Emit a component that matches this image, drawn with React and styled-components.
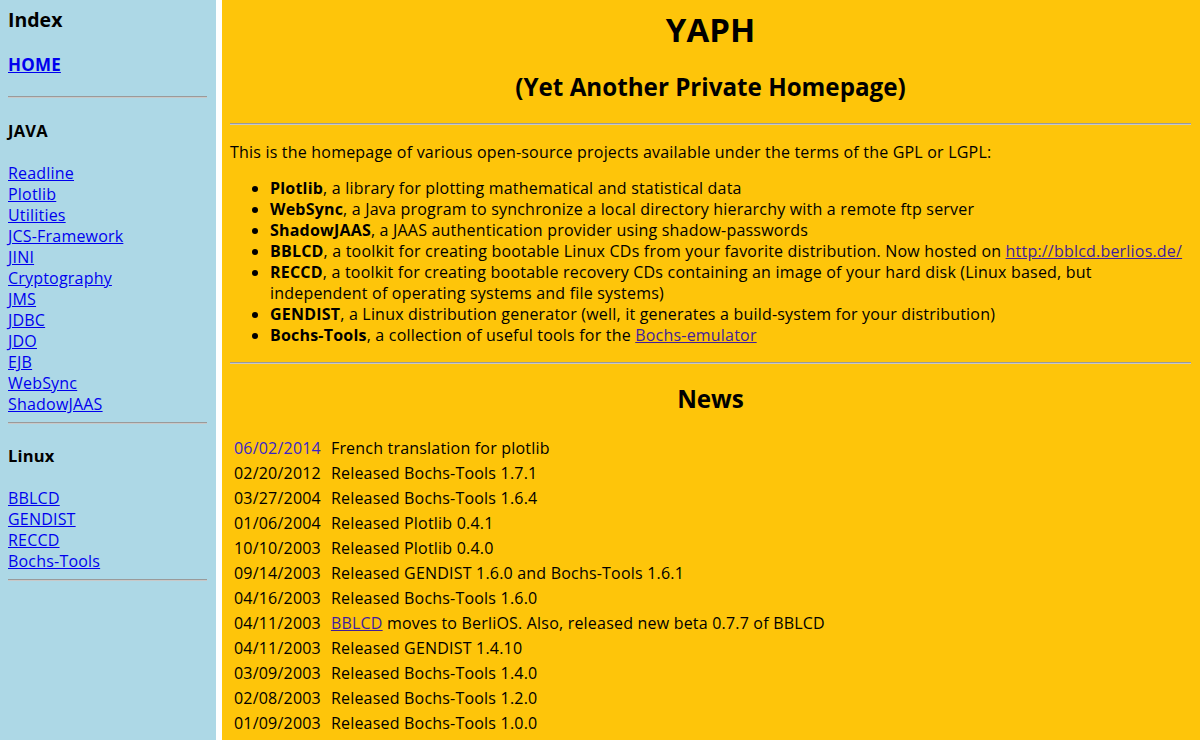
import React from "react";
import styled, { createGlobalStyle } from "styled-components";

const Global = createGlobalStyle`
  html, body { margin: 0; padding: 0; }
  body {
    font-family: "Open Sans", "Noto Sans", sans-serif;
    font-size: 16px;
    letter-spacing: 0.2px;
    color: #000;
  }
`;

const Frames = styled.div`
  display: flex;
  width: 1200px;
  height: 740px;
  overflow: hidden;
`;

const Sidebar = styled.nav`
  flex: none;
  background: #add8e6;
  padding: 8px 9px 0 8px;
  display: flex;
  flex-direction: column;
  width: 199px;
`;

const Divider = styled.div`
  width: 6px;
  flex: none;
  background: #ffffff;
`;

const Main = styled.main`
  flex: 1;
  background: #fec50a;
  padding: 10px 9px 0 8px;
  display: flex;
  flex-direction: column;
`;

const IndexTitle = styled.h3`
  margin: 0;
  font-size: 19.5px;
  line-height: 24px;
  font-weight: 700;
  letter-spacing: 0;
`;

const Link = styled.a`
  color: ${(p) => (p.$visited ? "#421e9a" : "#0000ee")};
  text-decoration: underline;
  font-weight: ${(p) => (p.$bold ? 700 : 400)};
  cursor: pointer;
`;

const HomeLine = styled.div`
  margin-top: 22px;
  line-height: 21px;
  font-size: 17px;
`;

const Rule = styled.hr`
  margin: ${(p) => p.$m || "21px 0 0"};
  border: none;
  border-top: 1px solid #9a9a9a;
  border-bottom: 1px solid #c8c8c8;
  height: 0;
`;

const Section = styled.h4`
  margin: ${(p) => p.$m || "22px 0 0"};
  font-size: 16.5px;
  line-height: 21px;
  font-weight: 700;
`;

const LinkList = styled.div`
  margin-top: 22px;
  display: flex;
  flex-direction: column;
  line-height: 21px;
`;

const Title = styled.h1`
  margin: 0;
  text-align: center;
  font-size: 33px;
  line-height: 40px;
  font-weight: 700;
  letter-spacing: 0;
`;

const Subtitle = styled.h2`
  margin: ${(p) => p.$m || "21px 0 0"};
  text-align: center;
  font-size: 24.2px;
  line-height: 32px;
  font-weight: 700;
  letter-spacing: 0;
`;

const Intro = styled.p`
  margin: 16.5px 0 0;
  line-height: 21px;
`;

const Projects = styled.ul`
  margin: 15px 0 0;
  padding-left: 40px;
  line-height: 21px;
`;

const NewsTable = styled.div`
  margin-top: 21.5px;
  padding-left: 4px;
  display: grid;
  grid-template-columns: max-content 1fr;
  column-gap: 10px;
  line-height: 25px;
`;

const NewsDate = styled.span`
  color: ${(p) => (p.$highlight ? "#3a24c8" : "#000")};
  white-space: nowrap;
`;

const java = [
  "Readline",
  "Plotlib",
  "Utilities",
  "JCS-Framework",
  "JINI",
  "Cryptography",
  "JMS",
  "JDBC",
  "JDO",
  "EJB",
  "WebSync",
  "ShadowJAAS",
];

const linux = ["BBLCD", "GENDIST", "RECCD", "Bochs-Tools"];

const news = [
  ["06/02/2014", "French translation for plotlib", true],
  ["02/20/2012", "Released Bochs-Tools 1.7.1"],
  ["03/27/2004", "Released Bochs-Tools 1.6.4"],
  ["01/06/2004", "Released Plotlib 0.4.1"],
  ["10/10/2003", "Released Plotlib 0.4.0"],
  ["09/14/2003", "Released GENDIST 1.6.0 and Bochs-Tools 1.6.1"],
  ["04/16/2003", "Released Bochs-Tools 1.6.0"],
  [
    "04/11/2003",
    <>
      <Link $visited>BBLCD</Link> moves to BerliOS. Also, released new beta 0.7.7 of BBLCD
    </>,
  ],
  ["04/11/2003", "Released GENDIST 1.4.10"],
  ["03/09/2003", "Released Bochs-Tools 1.4.0"],
  ["02/08/2003", "Released Bochs-Tools 1.2.0"],
  ["01/09/2003", "Released Bochs-Tools 1.0.0"],
];

export default function App() {
  return (
    <>
      <Global />
      <Frames>
        <Sidebar>
          <IndexTitle>Index</IndexTitle>
          <HomeLine>
            <Link $bold>HOME</Link>
          </HomeLine>
          <Rule />
          <Section>JAVA</Section>
          <LinkList>
            {java.map((n) => (
              <div key={n}>
                <Link>{n}</Link>
              </div>
            ))}
          </LinkList>
          <Rule $m="7px 0 0" />
          <Section $m="21px 0 0">Linux</Section>
          <LinkList>
            {linux.map((n) => (
              <div key={n}>
                <Link>{n}</Link>
              </div>
            ))}
          </LinkList>
          <Rule $m="7px 0 0" />
        </Sidebar>
        <Divider />
        <Main>
          <Title>YAPH</Title>
          <Subtitle>(Yet Another Private Homepage)</Subtitle>
          <Rule $m="20px 0 0" />
          <Intro>
            This is the homepage of various open-source projects available under the terms of the GPL or LGPL:
          </Intro>
          <Projects>
            <li>
              <b>Plotlib</b>, a library for plotting mathematical and statistical data
            </li>
            <li>
              <b>WebSync</b>, a Java program to synchronize a local directory hierarchy with a remote ftp server
            </li>
            <li>
              <b>ShadowJAAS</b>, a JAAS authentication provider using shadow-passwords
            </li>
            <li>
              <b>BBLCD</b>, a toolkit for creating bootable Linux CDs from your favorite distribution. Now hosted on{" "}
              <Link $visited>http://bblcd.berlios.de/</Link>
            </li>
            <li>
              <b>RECCD</b>, a toolkit for creating bootable recovery CDs containing an image of your hard disk (Linux based, but
              independent of operating systems and file systems)
            </li>
            <li>
              <b>GENDIST</b>, a Linux distribution generator (well, it generates a build-system for your distribution)
            </li>
            <li>
              <b>Bochs-Tools</b>, a collection of useful tools for the <Link $visited>Bochs-emulator</Link>
            </li>
          </Projects>
          <Rule $m="16px 0 0" />
          <Subtitle $m="19px 0 0">News</Subtitle>
          <NewsTable>
            {news.map(([d, t, hl], i) => (
              <React.Fragment key={i}>
                <NewsDate $highlight={hl}>{d}</NewsDate>
                <span>{t}</span>
              </React.Fragment>
            ))}
          </NewsTable>
        </Main>
      </Frames>
    </>
  );
}
